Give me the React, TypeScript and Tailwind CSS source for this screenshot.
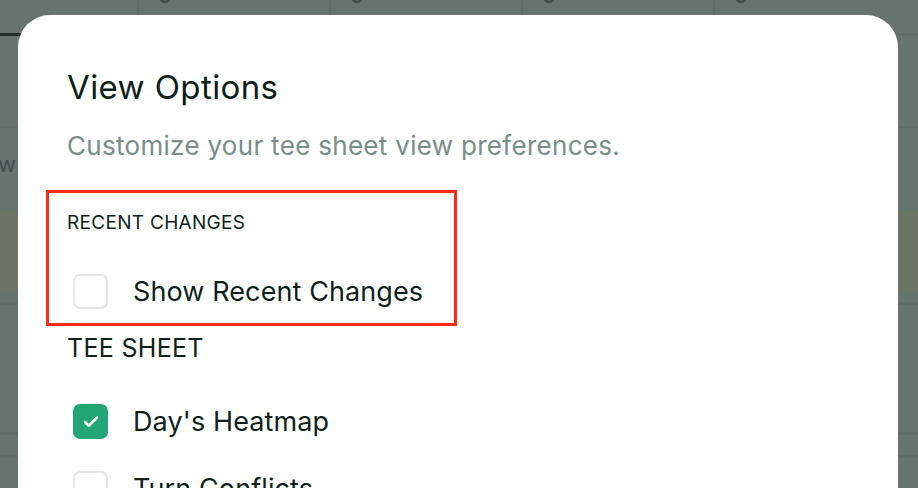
import { Check } from "lucide-react";

type Option = { label: string; checked: boolean };

const teeSheetOptions: Option[] = [
  { label: "Day's Heatmap", checked: true },
  { label: "Turn Conflicts", checked: false },
];

function Box({ checked }: { checked: boolean }) {
  if (checked) {
    return (
      <span className="flex h-[35px] w-[35px] shrink-0 items-center justify-center rounded-[7px] bg-[#22a675]">
        <Check className="h-[18px] w-[18px] text-white" strokeWidth={3.4} />
      </span>
    );
  }
  return (
    <span className="block h-[35px] w-[35px] shrink-0 rounded-[7px] border-2 border-[#e3e6e5] bg-white" />
  );
}

function OptionRow({ option }: { option: Option }) {
  return (
    <div className="flex h-[35px] items-center gap-[25px] pl-[6px]">
      <Box checked={option.checked} />
      <span className="text-[27px] leading-[35px] tracking-[0.1px] text-[#0e1f1c]">
        {option.label}
      </span>
    </div>
  );
}

function Backdrop() {
  const cols = [0, 1, 2, 3];
  return (
    <div className="flex h-full w-full flex-col bg-[#66736f]">
      <div className="flex h-[33px]">
        <div className="w-[137px] shrink-0" />
        {cols.map((c) => (
          <div
            key={c}
            className="w-[192px] shrink-0 border-l-2 border-[#5f6c69] pl-[17px]"
          >
            <div className="-mt-[22px] text-[28px] leading-[30px] text-[#3f4d4a]">
              0
            </div>
          </div>
        ))}
      </div>
      <div className="flex h-[3px]">
        <div className="w-[40px] bg-[#1f2d2a]" />
        <div className="flex-1 bg-[#5f6c69]" />
      </div>
      <div className="h-[90px]" />
      <div className="h-[2px] bg-[#5f6c69]" />
      <div className="flex h-[83px] items-center text-[22px] text-[#3f4d4a]">
        <span className="-ml-[2px] -mt-[10px]">w</span>
      </div>
      <div className="h-[81px] bg-[#6a7564]" />
      <div className="h-[10px]" />
      <div className="h-[3px] bg-[#5f6c69]" />
      <div className="h-[127px]" />
      <div className="h-[3px] bg-[#5f6c69]" />
      <div className="h-[20px]" />
      <div className="h-[3px] bg-[#5f6c69]" />
      <div className="flex-1" />
    </div>
  );
}

export default function App() {
  return (
    <div
      className="relative h-[488px] w-[918px] overflow-hidden"
      style={{ fontFamily: "Inter, 'Noto Sans', sans-serif" }}
    >
      <Backdrop />
      <div className="absolute left-[18px] top-[15px] h-[520px] w-[880px] rounded-[32px] bg-white px-[49px] pt-[52px]">
        <h2 className="text-[33px] leading-[40px] font-normal tracking-[0.4px] text-[#0c1d1a]">
          View Options
        </h2>
        <p className="mt-[23px] text-[26px] leading-[32px] tracking-[0.3px] text-[#7b8d89]">
          Customize your tee sheet view preferences.
        </p>

        <div className="mt-[28px] -ml-[21px] w-[411px] border-[3px] border-[#ff2b12] pb-[14px] pl-[18px] pt-[16px]">
          <div className="text-[19px] leading-[28px] tracking-[0.3px] text-[#0e1f1c]">
            RECENT CHANGES
          </div>
          <div className="mt-[37px]">
            <OptionRow option={{ label: "Show Recent Changes", checked: false }} />
          </div>
        </div>

        <div className="mt-[6px] text-[25px] leading-[32px] tracking-[0.3px] text-[#0e1f1c]">
          TEE SHEET
        </div>
        <div className="mt-[40px] flex flex-col gap-[32px]">
          {teeSheetOptions.map((opt) => (
            <OptionRow key={opt.label} option={opt} />
          ))}
        </div>
      </div>
    </div>
  );
}
